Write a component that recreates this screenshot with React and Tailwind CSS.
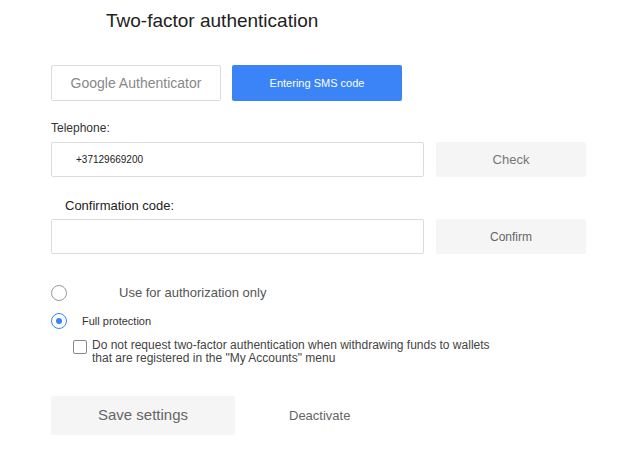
import React, { useState } from 'react';

export default function App() {
  const [mode, setMode] = useState('full');
  const [skip, setSkip] = useState(false);

  return (
    <div className="w-[642px] h-[450px] bg-white text-[#333] overflow-hidden" style={{ fontFamily: '"Liberation Sans", Arial, sans-serif' }}>
      <div className="pl-[51px] pt-[10px]">
        <h1 className="pl-[55px] text-[19px] leading-[22px] text-[#222]">Two-factor authentication</h1>

        <div className="flex gap-[11px] mt-[33px]">
          <button className="w-[170px] h-[36px] border border-[#dcdcdc] rounded-[2px] text-[14px] text-[#888]">
            Google Authenticator
          </button>
          <button className="w-[170px] h-[36px] bg-[#3a84f8] rounded-[2px] text-[11px] text-white">
            Entering SMS code
          </button>
        </div>

        <div className="mt-[20px] text-[12px] leading-[14px] text-[#333]">Telephone:</div>
        <div className="flex gap-[12px] mt-[7px]">
          <div className="w-[373px] h-[35px] border border-[#dcdcdc] rounded-[2px] flex items-center pl-[24px] text-[10px] text-[#222]">
            +37129669200
          </div>
          <button className="w-[150px] h-[35px] bg-[#f5f5f5] rounded-[2px] text-[13px] text-[#777]">Check</button>
        </div>

        <div className="mt-[21px] pl-[14px] text-[13px] leading-[15px] text-[#222]">Confirmation code:</div>
        <div className="flex gap-[12px] mt-[6px]">
          <div className="w-[373px] h-[35px] border border-[#dcdcdc] rounded-[2px]" />
          <button className="w-[150px] h-[35px] bg-[#f5f5f5] rounded-[2px] text-[12px] text-[#666]">Confirm</button>
        </div>

        <div className="mt-[31px] flex items-center h-[16px] cursor-pointer" onClick={() => setMode('auth')}>
          <span className={`w-[16px] h-[16px] rounded-full border flex items-center justify-center ${mode === 'auth' ? 'border-[#3a84f8]' : 'border-[#999]'}`}>
            {mode === 'auth' && <span className="w-[6px] h-[6px] rounded-full bg-[#3a84f8]" />}
          </span>
          <span className="ml-[52px] text-[13px] text-[#555]">Use for authorization only</span>
        </div>

        <div className="mt-[12px] flex items-center h-[16px] cursor-pointer" onClick={() => setMode('full')}>
          <span className={`w-[16px] h-[16px] rounded-full border flex items-center justify-center ${mode === 'full' ? 'border-[#3a84f8]' : 'border-[#999]'}`}>
            {mode === 'full' && <span className="w-[6px] h-[6px] rounded-full bg-[#3a84f8]" />}
          </span>
          <span className="ml-[15px] text-[11px] text-[#333]">Full protection</span>
        </div>

        <div className="mt-[10px] ml-[22px] flex items-start cursor-pointer" onClick={() => setSkip(!skip)}>
          <span className={`mt-[1px] w-[14px] h-[14px] border rounded-[2px] shrink-0 ${skip ? 'bg-[#3a84f8] border-[#3a84f8]' : 'border-[#888]'}`} />
          <span className="ml-[5px] text-[12px] leading-[13px] text-[#444]">
            Do not request two-factor authentication when withdrawing funds to wallets<br />
            that are registered in the "My Accounts" menu
          </span>
        </div>

        <div className="mt-[31px] flex items-center">
          <button className="w-[184px] h-[39px] bg-[#f5f5f5] rounded-[2px] text-[15px] text-[#666]">Save settings</button>
          <button className="ml-[54px] text-[13px] text-[#666]">Deactivate</button>
        </div>
      </div>
    </div>
  );
}
